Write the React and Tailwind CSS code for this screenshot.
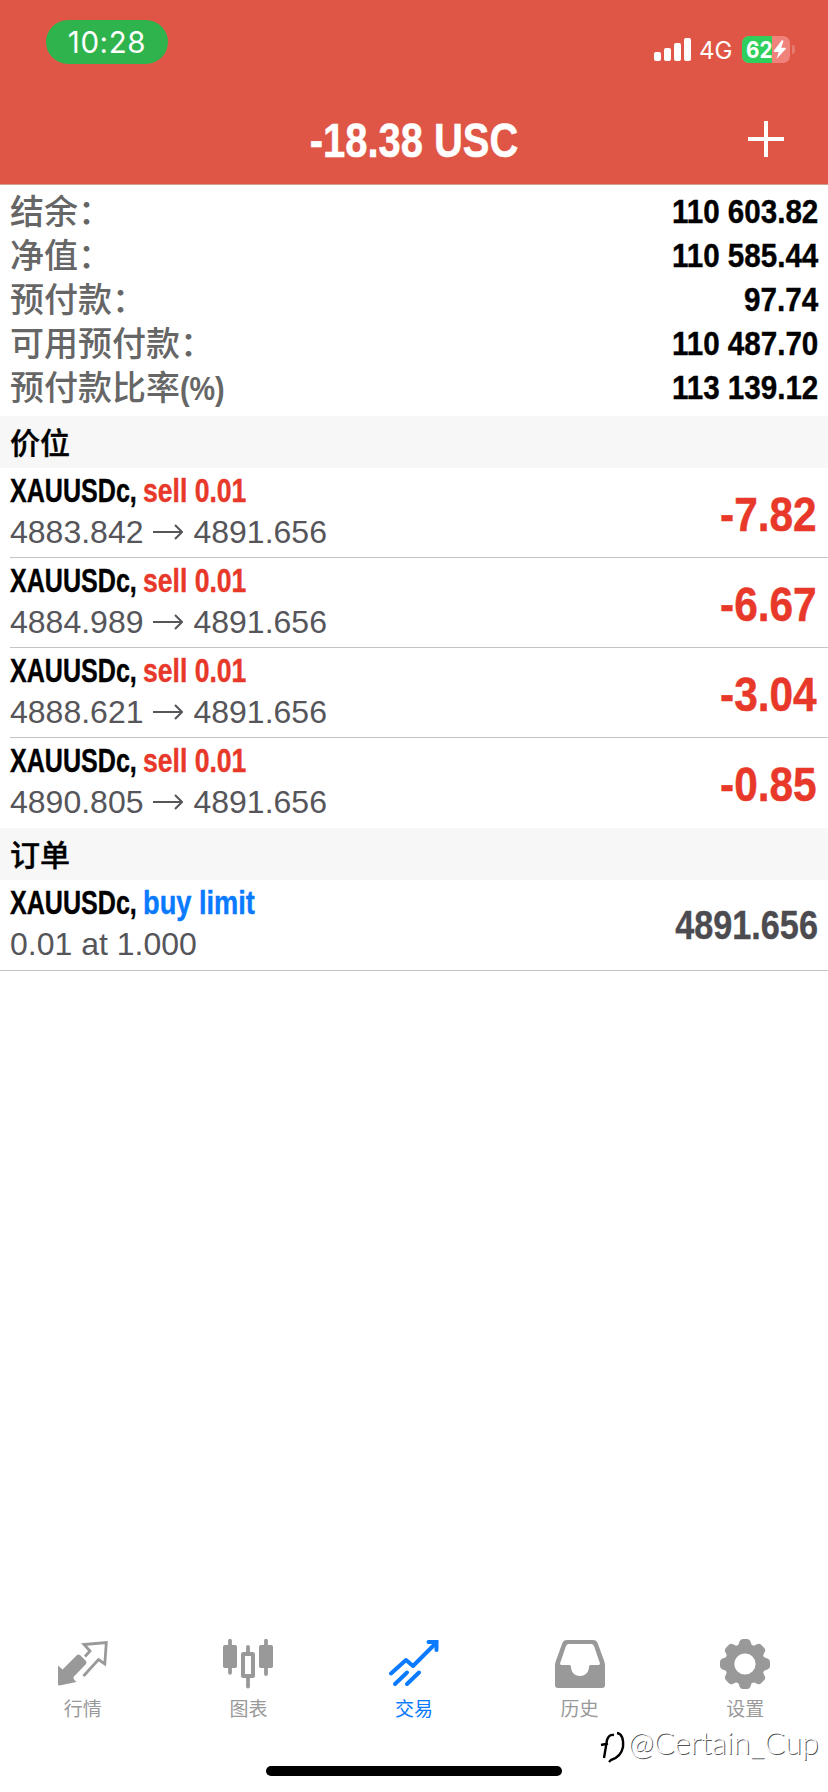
import React from 'react';

const summary = [
  { label: '结余：', value: '110 603.82' },
  { label: '净值：', value: '110 585.44' },
  { label: '预付款：', value: '97.74' },
  { label: '可用预付款：', value: '110 487.70' },
  { label: '预付款比率', suffix: '(%)', value: '113 139.12' },
];

const positions = [
  { symbol: 'XAUUSDc', side: 'sell 0.01', open: '4883.842', current: '4891.656', profit: '-7.82' },
  { symbol: 'XAUUSDc', side: 'sell 0.01', open: '4884.989', current: '4891.656', profit: '-6.67' },
  { symbol: 'XAUUSDc', side: 'sell 0.01', open: '4888.621', current: '4891.656', profit: '-3.04' },
  { symbol: 'XAUUSDc', side: 'sell 0.01', open: '4890.805', current: '4891.656', profit: '-0.85' },
];

const QuotesIcon = () => (
  <svg width="50" height="50" viewBox="0 0 50 50" fill="none">
    <path d="M0 26.5L4.5 30.5L19 16Q20.5 14.8 22 16L28 22Q29 23.5 28 25L15.5 38Q15 40 18.5 43L1.5 46.5Q0 46.5 0 45Z" fill="currentColor" />
    <path d="M27 17.5L32 12L26 5.5L48.3 3.5L46.8 25L40.5 20.5L25.5 37" stroke="currentColor" strokeWidth="2.8" />
  </svg>
);

const ChartIcon = () => (
  <svg width="50" height="50" viewBox="0 0 50 50" fill="none" stroke="currentColor">
    <path d="M7 1.8V33.8M43 1.8V35M25 8V15M25 39V47.5" strokeWidth="3.8" strokeLinecap="round" />
    <rect x="0" y="6" width="14" height="23" rx="1.8" fill="currentColor" stroke="none" />
    <rect x="36" y="6" width="14" height="23" rx="1.8" fill="currentColor" stroke="none" />
    <rect x="20" y="15" width="10" height="22" rx="0.5" strokeWidth="4" />
  </svg>
);

const TradeIcon = () => (
  <svg width="50" height="50" viewBox="0 0 50 50" fill="none" stroke="currentColor" strokeWidth="4">
    <path d="M2 34.5L17 21L24 27L47 4" strokeLinecap="round" strokeLinejoin="round" />
    <path d="M39.5 3H47.5V11" strokeLinecap="round" strokeLinejoin="miter" />
    <path d="M6 45L18 33.5M18 45L30 33.5" strokeLinecap="round" />
  </svg>
);

const HistoryIcon = () => (
  <svg width="50" height="50" viewBox="0 0 50 50" fill="currentColor">
    <path
      fillRule="evenodd"
      d="M12 1H38Q41.5 1 42.7 4.2L49.2 22Q50 24.5 50 27V46Q50 49 47 49H3Q0 49 0 46V27Q0 24.5 .8 22L7.3 4.2Q8.5 1 12 1ZM13.8 5Q11.8 5 11.1 6.8L5.1 24.2Q4.8 26 6.5 26H14.5Q16 26 16 27.5C16 33 19.5 37 25 37S34 33 34 27.5Q34 26 35.5 26H43.5Q45.2 26 44.9 24.2L38.9 6.8Q38.2 5 36.2 5Z"
    />
  </svg>
);

const teeth = [0, 45, 90, 135, 180, 225, 270, 315];

const SettingsIcon = () => (
  <svg width="50" height="50" viewBox="0 0 50 50" fill="currentColor">
    <circle cx="25" cy="25" r="15.3" fill="none" stroke="currentColor" strokeWidth="9.4" />
    {teeth.map((angle) => (
      <path
        key={angle}
        d="M16.5 7.5C18.6 6.3 18.9 4.5 19.5 2.6Q20.3 0 22.8 0H27.2Q29.7 0 30.5 2.6C31.1 4.5 31.4 6.3 33.5 7.5L31 12H19Z"
        transform={`rotate(${angle} 25 25)`}
      />
    ))}
  </svg>
);

const tabs = [
  { name: '行情', icon: QuotesIcon },
  { name: '图表', icon: ChartIcon },
  { name: '交易', icon: TradeIcon, active: true },
  { name: '历史', icon: HistoryIcon },
  { name: '设置', icon: SettingsIcon },
];

const StatusBar = () => (
  <div className="h-[94px] pl-[46px] pr-[33px] flex items-start justify-between font-['Inter',sans-serif]">
    <div className="mt-5 pt-[1px] w-[122px] h-[44px] rounded-full bg-[#2fb44d] flex items-center justify-center text-[29.5px] tracking-[0.6px]">
      10:28
    </div>
    <div className="mt-[36px] h-[27px] flex items-center">
      <svg width="38" height="24" viewBox="0 0 38 24" fill="currentColor">
        <rect x="0" y="14" width="7" height="9" rx="2" />
        <rect x="10" y="10" width="7" height="13" rx="2" />
        <rect x="20" y="5" width="7" height="18" rx="2" />
        <rect x="30" y="0" width="7" height="23" rx="2" />
      </svg>
      <span className="ml-[7px] mt-[2px] w-[34px] text-[24px] leading-none">4G</span>
      <div className="ml-[9px] w-[48px] h-[27px] rounded-[7px] overflow-hidden bg-[#f0827c] flex">
        <div className="w-[30px] h-full bg-[#2fcf5b] flex items-center pt-[1px] pl-[4px] text-[23.5px] font-bold">
          <span className="origin-left scale-x-[0.88]">62</span>
        </div>
        <svg className="ml-[1px] mt-[4px]" width="14" height="20" viewBox="0 0 14 20" fill="currentColor">
          <path d="M9 0L1 10.5Q.5 12 1.8 12H5.7L3.5 19L12.7 9Q13.5 7.7 12 7.7H8.2L10.5 1Z" />
        </svg>
      </div>
      <div className="ml-[2px] w-[3px] h-[9px] rounded-r-full bg-[#e8796d]"></div>
    </div>
  </div>
);

const SectionHeader = ({ children }) => (
  <div className="h-[52px] pl-[10px] pt-[3px] bg-[#f7f7f7] flex items-center text-[30px] leading-none font-medium [-webkit-text-stroke:0.4px_currentColor]">
    {children}
  </div>
);

const SymbolLine = ({ symbol, children }) => (
  <div className="flex h-[41px] items-center pt-[4px] text-[33px] leading-none font-bold [-webkit-text-stroke:0.4px_currentColor] whitespace-nowrap">
    <span className="w-[133px] origin-left scale-x-[0.76]">{symbol},</span>
    {children}
  </div>
);

export default function App() {
  return (
    <div className="w-[828px] h-[1792px] bg-white flex flex-col relative overflow-hidden text-black font-['Liberation_Sans','Noto_Sans_CJK_SC',sans-serif]">
      {/* Header */}
      <header className="h-[185px] shrink-0 bg-[#e05646] border-b border-[#cf9f93] text-white">
        <StatusBar />
        <div className="h-[90px] pr-[44px] grid grid-cols-[1fr_auto_1fr] items-center">
          <span></span>
          <h1 className="ml-[44px] text-[49px] leading-none font-bold pt-[3px] scale-x-[0.815] [-webkit-text-stroke:0.5px_currentColor] whitespace-nowrap">-18.38 USC</h1>
          <svg className="justify-self-end" width="36" height="36" viewBox="0 0 36 36" stroke="currentColor" strokeWidth="4">
            <path d="M18 0V36M0 18H36" />
          </svg>
        </div>
      </header>

      {/* Account summary */}
      <section className="h-[231px] shrink-0 pt-[4px] px-[10px]">
        {summary.map((row) => (
          <div key={row.label} className="h-[44px] flex items-center justify-between">
            <span className="pt-[2px] flex items-center text-[34px] leading-none font-medium text-[#666]">
              {row.label}
              {row.suffix && <span className="text-[33px] font-bold origin-left scale-x-[0.87]">{row.suffix}</span>}
            </span>
            <span className="text-[34px] leading-none font-bold origin-right scale-x-[0.87] [-webkit-text-stroke:0.4px_currentColor]">{row.value}</span>
          </div>
        ))}
      </section>

      {/* Open positions */}
      <SectionHeader>价位</SectionHeader>
      <section className="shrink-0">
        {positions.map((p, i) => (
          <div
            key={p.open}
            className={`ml-[10px] pr-[11px] h-[90px] flex items-center justify-between border-b ${i < positions.length - 1 ? 'border-[#c4c4c6]' : 'border-transparent'}`}
          >
            <div className="h-full">
              <SymbolLine symbol={p.symbol}>
                <span className="text-[#e8382a] origin-left scale-x-[0.805]">{p.side}</span>
              </SymbolLine>
              <div className="h-[46px] flex items-center text-[32px] leading-none text-[#55555a]">
                {p.open}
                <svg className="mx-[10px]" width="30" height="16" viewBox="0 0 30 16" fill="none" stroke="currentColor" strokeWidth="2">
                  <path d="M0 8H29M22 1L29 8L22 15" />
                </svg>
                {p.current}
              </div>
            </div>
            <span className="pt-[3px] text-[49px] leading-none font-bold text-[#e8382a] origin-right scale-x-[0.865] [-webkit-text-stroke:0.5px_currentColor]">{p.profit}</span>
          </div>
        ))}
      </section>

      {/* Pending orders */}
      <SectionHeader>订单</SectionHeader>
      <section className="h-[91px] shrink-0 pl-[10px] pr-[10px] flex items-center justify-between border-b border-[#c4c4c6]">
        <div className="h-full">
          <SymbolLine symbol="XAUUSDc">
            <span className="text-[#0a7aff] origin-left scale-x-[0.825]">buy limit</span>
          </SymbolLine>
          <div className="h-[46px] flex items-center text-[32px] leading-none text-[#55555a]">0.01 at 1.000</div>
        </div>
        <span className="pt-[1px] text-[40.5px] leading-none font-bold text-[#4b4b50] origin-right scale-x-[0.845] [-webkit-text-stroke:0.4px_currentColor]">4891.656</span>
      </section>

      {/* Bottom navigation */}
      <nav className="mt-auto h-[153px] shrink-0 grid grid-cols-5">
        {tabs.map(({ name, icon: Icon, active }) => (
          <div key={name} className={`flex flex-col items-center ${active ? 'text-[#0a7aff]' : 'text-[#999]'}`}>
            <Icon />
            <span className="mt-[11px] text-[19px] leading-[20px]">{name}</span>
          </div>
        ))}
      </nav>
      <div className="absolute left-[266px] bottom-[16px] w-[296px] h-[10px] rounded-full bg-black"></div>

      {/* Author watermark */}
      <div className="absolute left-[600px] top-[1727px] flex items-start text-white">
        <svg className="mt-[2px]" width="27" height="36" viewBox="0 0 27 36" fill="none" stroke="#000" strokeWidth="2.4">
          <path d="M4 29L7 11Q9 5 14 6M1 16L8 14.5" />
          <path d="M17 4Q24 5 23 18Q21 28 11 31L9 33" />
        </svg>
        <span className="ml-[1px] -mt-[3px] text-[31px] leading-[36px] tracking-[-0.1px] font-light font-['Lato',sans-serif] [text-shadow:1px_1px_0px_#555]">@Certain_Cup</span>
      </div>
    </div>
  );
}
